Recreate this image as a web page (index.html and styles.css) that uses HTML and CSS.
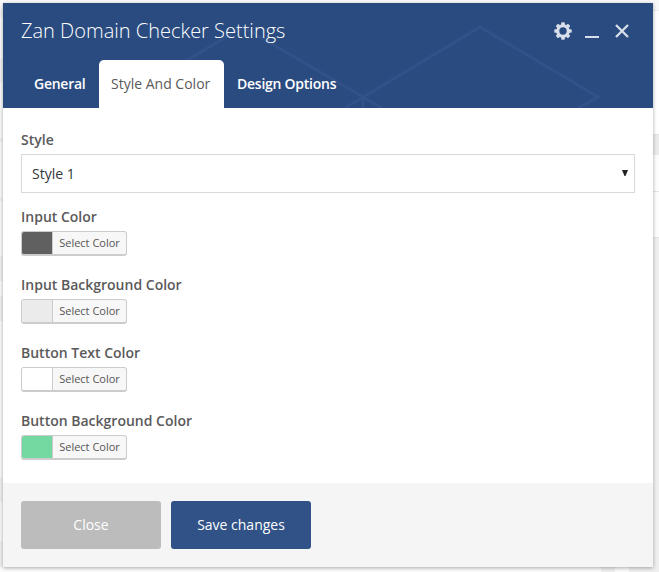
FILE: index.html
```html
<!DOCTYPE html>
<html lang="en">
<head>
<meta charset="utf-8">
<title>Zan Domain Checker Settings</title>
<link rel="stylesheet" href="styles.css">
</head>
<body>
<main class="panel">
  <header class="panel-header">
    <svg class="pattern" width="650" height="105" viewBox="3 3 650 105" aria-hidden="true">
      <path d="M125 97L243 27L382 108M345 108L480 27L598 97L578 108M363 96V108"/>
    </svg>
    <div class="title-row">
      <h1>Zan Domain Checker Settings</h1>
      <div class="controls">
        <svg width="18" height="18" viewBox="-9 -9 18 18" aria-label="Settings">
          <circle r="5.2" fill="none" stroke="currentColor" stroke-width="3"/>
          <g fill="currentColor">
            <path id="tooth" d="M-2.1 -6L-1.5 -8.7H1.5L2.1 -6Z"/>
            <use href="#tooth" transform="rotate(45)"/>
            <use href="#tooth" transform="rotate(90)"/>
            <use href="#tooth" transform="rotate(135)"/>
            <use href="#tooth" transform="rotate(180)"/>
            <use href="#tooth" transform="rotate(225)"/>
            <use href="#tooth" transform="rotate(270)"/>
            <use href="#tooth" transform="rotate(315)"/>
          </g>
        </svg>
        <svg width="14" height="18" viewBox="0 0 14 18" aria-label="Minimize"><path d="M0 14h14v2H0z" fill="currentColor"/></svg>
        <svg width="14" height="18" viewBox="0 0 14 18" aria-label="Close"><path d="M1 3L13 15M13 3L1 15" stroke="currentColor" stroke-width="2.3"/></svg>
      </div>
    </div>
    <nav class="tabs">
      <a class="tab">General</a>
      <a class="tab active">Style And Color</a>
      <a class="tab">Design Options</a>
    </nav>
  </header>
  <section class="content">
    <div class="field style-field">
      <div class="label">Style</div>
      <div class="select"><span>Style 1</span><svg width="6" height="6" viewBox="0 0 6 6"><path d="M0 0h6L3.5 6h-1z" fill="#222"/></svg></div>
    </div>
    <div class="field">
      <div class="label">Input Color</div>
      <button class="picker"><i class="swatch dark"></i><span>Select Color</span></button>
    </div>
    <div class="field">
      <div class="label">Input Background Color</div>
      <button class="picker"><i class="swatch light"></i><span>Select Color</span></button>
    </div>
    <div class="field">
      <div class="label">Button Text Color</div>
      <button class="picker"><i class="swatch white"></i><span>Select Color</span></button>
    </div>
    <div class="field">
      <div class="label">Button Background Color</div>
      <button class="picker"><i class="swatch green"></i><span>Select Color</span></button>
    </div>
  </section>
  <footer class="panel-footer">
    <button class="btn close">Close</button>
    <button class="btn save">Save changes</button>
  </footer>
</main>
</body>
</html>
```
FILE: styles.css
```css
* { box-sizing: border-box; }
html, body { margin: 0; height: 572px; overflow: hidden; }
body {
  padding: 3px;
  font-family: "Open Sans", sans-serif;
  font-size: 14px;
  color: #5a5a5a;
  background:
    linear-gradient(#f8f8f8 10px, #eee 10px, #eee 11px, #fff 11px, #fff 134px, #ddd 134px, #ebebeb 135px, #ebebeb 155px, #fdfdfd 155px, #fdfdfd 191px, #e6e6e6 191px, #e6e6e6 192px, #fdfdfd 192px, #fdfdfd 237px, #ddd 237px, #efefef 238px) 653px 0 / 6px 100% no-repeat,
    linear-gradient(90deg, #fcfcfc 601px, #f0f0f0 601px, #f0f0f0 615px, #fcfcfc 615px, #fcfcfc 629px, #efefef 629px) 0 567px / 100% 5px no-repeat,
    linear-gradient(#fafafa 9px, #f3f3f3 9px, #f3f3f3 18px, #fafafa 18px, #fafafa 59px, #f1f1f1 59px, #f1f1f1 82px, #fafafa 82px, #fafafa 138px, #f1f1f1 138px, #f1f1f1 142px, #fafafa 142px, #fafafa 198px, #f1f1f1 198px, #f1f1f1 201px, #fafafa 201px, #fafafa 256px, #f0f0f0 256px, #f0f0f0 281px, #fafafa 281px, #fafafa 296px, #f0f0f0 296px, #f0f0f0 321px, #fafafa 321px, #fafafa 478px, #f0f0f0 478px, #f0f0f0 502px, #fafafa 502px, #fafafa 541px, #f0f0f0 541px);
}
.panel {
  width: 650px;
  height: 564px;
  display: flex;
  flex-direction: column;
  background: #fff;
  box-shadow: 0 1px 4px rgba(0, 0, 0, .33);
}
.panel-header {
  position: relative;
  height: 105px;
  display: flex;
  flex-direction: column;
  justify-content: space-between;
  background: #2a4b80;
  color: #fff;
}
.pattern { position: absolute; inset: 0; fill: none; stroke: #315289; stroke-width: 3; }
.title-row {
  position: relative;
  height: 55px;
  padding: 0 24px 0 18px;
  display: flex;
  align-items: center;
  justify-content: space-between;
}
h1 { margin: 0; font-size: 20px; font-weight: 300; line-height: 28px; }
.controls { display: flex; gap: 13px; color: #d8deea; }
.controls svg:last-child { margin-left: 3px; }
.tabs { position: relative; height: 48px; display: flex; padding-left: 18px; }
.tab { padding: 0 12px 0 13px; line-height: 48px; font-weight: 600; letter-spacing: -.25px; white-space: nowrap; }
.tab:first-child { width: 78px; }
.tab.active { width: 125px; padding: 0 12px; background: #fff; color: #5a5a5a; border-radius: 5px 5px 0 0; font-weight: 400; letter-spacing: 0; }
.content { flex: 1; padding: 22px 18px 0; }
.field { height: 68px; }
.style-field { height: 77px; }
.label { line-height: 20px; font-weight: 600; margin-bottom: 4px; }
.select {
  height: 39px;
  display: flex;
  align-items: center;
  justify-content: space-between;
  padding: 0 6px 0 10px;
  border: 1px solid #d9d9d9;
  color: #32373c;
}
.select svg { margin-bottom: 2px; }
.picker {
  display: flex;
  width: 106px;
  height: 25px;
  padding: 0;
  border: 1px solid #ccc;
  border-bottom-width: 2px;
  border-radius: 3px;
  overflow: hidden;
  background: #f7f7f7;
  font: 11px/22px "Open Sans", sans-serif;
  color: #555;
}
.swatch { width: 31px; height: 22px; border-right: 1px solid #ccc; }
.picker span { flex: 1; text-align: center; }
.dark { background: #606060; }
.light { background: #ebebeb; }
.white { background: #fff; }
.green { background: #74d9a1; }
.panel-footer { height: 84px; padding: 18px; display: flex; gap: 10px; background: #f5f5f5; }
.btn {
  width: 140px;
  height: 48px;
  padding: 0 0 2px;
  border: 0;
  border-radius: 3px;
  font: 14px "Open Sans", sans-serif;
  color: #fff;
}
.close { background: #bcbcbc; }
.save { background: #305287; }
```
